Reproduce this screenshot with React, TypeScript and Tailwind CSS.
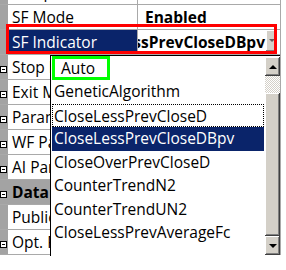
import React from "react";

type Row = {
  label: string;
  icon?: boolean;
  value?: string;
  selected?: boolean;
  category?: boolean;
};

const rows: Row[] = [
  { label: "Sample" },
  { label: "SF Mode", value: "Enabled" },
  { label: "SF Indicator", selected: true, value: "CloseLessPrevCloseDBpv" },
  { label: "Stop Loss", icon: true },
  { label: "Exit Mode", icon: true },
  { label: "Parameters", icon: true },
  { label: "WF Params", icon: true },
  { label: "AI Params", icon: true },
  { label: "Data", icon: true, category: true },
  { label: "Public" },
  { label: "Opt. Params", icon: true },
];

const items = [
  "Auto",
  "GeneticAlgorithm",
  "CloseLessPrevCloseD",
  "CloseLessPrevCloseDBpv",
  "CloseOverPrevCloseD",
  "CounterTrendN2",
  "CounterTrendUN2",
  "CloseLessPrevAverageFc",
];

function Minus() {
  return (
    <div className="flex h-[7px] w-[7px] flex-none items-center justify-center border border-black bg-white">
      <div className="h-[1px] w-[3px] bg-black" />
    </div>
  );
}

function GridRow({ r }: { r: Row }) {
  if (r.category) {
    return (
      <div className="flex h-[25px] border-b border-[#a9a9a9] bg-[#a3a3a3]">
        <div className="flex w-[8px] flex-none items-center pt-[4px]">
          {r.icon && <Minus />}
        </div>
        <div className="pl-[4px] leading-[24px] font-bold">{r.label}</div>
      </div>
    );
  }
  return (
    <div className="flex h-[25px] border-b border-[#a9a9a9]">
      <div className="flex w-[8px] flex-none items-center bg-[#a3a3a3] pt-[4px]">
        {r.icon && <Minus />}
      </div>
      <div
        className={`w-[130px] flex-none overflow-hidden whitespace-nowrap border-r border-[#a9a9a9] pl-[4px] leading-[24px] ${
          r.selected ? "bg-[#0a246a] text-white" : "bg-white"
        }`}
      >
        {r.label}
      </div>
      <div className="flex min-w-0 flex-1 bg-white">
        {r.selected ? (
          <>
            <div className="flex min-w-0 flex-1 justify-end overflow-hidden whitespace-nowrap pr-[1px] font-bold leading-[24px]">
              {r.value}
            </div>
            <div className="flex h-[21px] w-[11px] flex-none items-center justify-center bg-[#d4d0c8] shadow-[inset_-1px_-1px_#808080,inset_1px_1px_#ffffff]">
              <div className="h-0 w-0 border-x-[3px] border-t-[3px] border-x-transparent border-t-[#606060]" />
            </div>
            <div className="w-[3px] flex-none" />
          </>
        ) : (
          <div className="overflow-hidden whitespace-nowrap pl-[7px] font-bold leading-[24px]">
            {r.value}
          </div>
        )}
      </div>
    </div>
  );
}

function ScrollButton({ up }: { up: boolean }) {
  return (
    <div className="flex h-[19px] w-[15px] flex-none items-center justify-center bg-[#d4d0c8] shadow-[inset_-1px_-1px_#404040,inset_1px_1px_#ffffff,inset_-2px_-2px_#808080]">
      {up ? (
        <div className="h-0 w-0 border-x-[4px] border-b-[4px] border-x-transparent border-b-black" />
      ) : (
        <div className="h-0 w-0 border-x-[4px] border-t-[4px] border-x-transparent border-t-black" />
      )}
    </div>
  );
}

export default function App() {
  return (
    <div className="relative h-[270px] w-[286px] overflow-hidden bg-white font-['Open_Sans','Noto_Sans',sans-serif] text-[15.5px] text-black">
      <div className="-mt-[20px] w-[281px] border-r border-[#a9a9a9]">
        {rows.map((r, i) => (
          <GridRow key={i} r={r} />
        ))}
      </div>

      {/* dropdown list */}
      <div className="absolute left-[50px] top-[55px] flex h-[201px] w-[230px] border-l border-t border-black bg-white pt-[1px]">
        <div className="flex w-[214px] flex-none flex-col">
          {items.map((it, i) => {
            const sel = i === 3;
            const focus = i === 2;
            return (
              <div
                key={it}
                className={`ml-[1px] mr-[1px] h-[23.43px] flex-none whitespace-nowrap leading-[23px] ${
                  sel ? "bg-[#0a246a] text-white" : ""
                } ${focus ? "border border-dotted border-black pl-[1px] leading-[21px]" : ""} ${
                  i === 0 ? "pl-[9px]" : focus ? "" : "pl-[2px]"
                }`}
              >
                {it}
              </div>
            );
          })}
        </div>
        <div className="flex w-[15px] flex-none flex-col">
          <ScrollButton up />
          <div className="h-[17px] flex-none bg-[repeating-conic-gradient(#d4d0c8_0%_25%,#ffffff_0%_50%)] bg-[length:2px_2px]" />
          <div className="h-[143px] flex-none bg-[#d4d0c8] shadow-[inset_-1px_-1px_#404040,inset_1px_1px_#ffffff,inset_-2px_-2px_#808080]" />
          <ScrollButton up={false} />
        </div>
      </div>

      {/* annotations */}
      <div className="pointer-events-none absolute left-[6px] top-[24px] h-[30px] w-[271px] border-[3px] border-[#ff0000]" />
      <div className="pointer-events-none absolute left-[52px] top-[56px] h-[24px] w-[58px] border-[3px] border-[#00ff00]" />
    </div>
  );
}
